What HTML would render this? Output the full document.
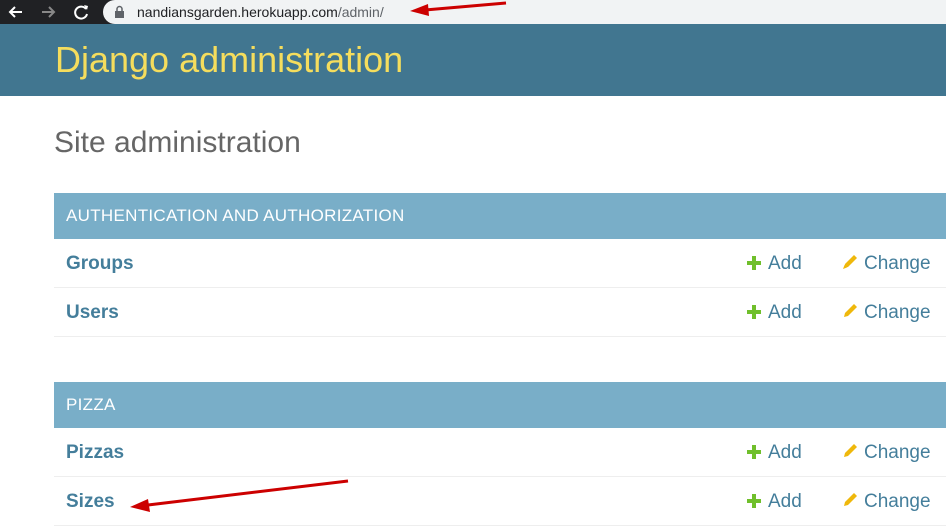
<!DOCTYPE html>
<html><head><style>
body{margin:0;width:946px;height:531px;overflow:hidden;background:#fff;font-family:"Liberation Sans",sans-serif;position:relative}
.bar{position:absolute;left:0;top:0;width:946px;height:24px;background:#202124}
.pill{position:absolute;left:103px;top:0;width:860px;height:24px;background:#f1f3f4;border-radius:12px 0 0 12px}
.url{position:absolute;left:137px;top:4px;font-size:14px;color:#202124}
.url span{color:#5f6368}
.hdr{position:absolute;left:0;top:24px;width:946px;height:72px;background:#417690}
.hdr h1{margin:0;position:absolute;left:55px;top:15px;font-weight:normal;font-size:36px;color:#f5dd5d}
.st{position:absolute;left:54px;top:126px;font-size:30px;color:#666}
.cap{position:absolute;left:54px;width:892px;height:46px;background:#79aec8;color:#fff;font-size:17px;line-height:46px;padding-left:12px;box-sizing:border-box;letter-spacing:.3px}
.row{position:absolute;left:54px;width:892px;height:49px;border-bottom:1px solid #eee;box-sizing:border-box;color:#447e9b;font-size:19px;line-height:49px;white-space:nowrap}
.row b{position:absolute;left:12px}
.add{position:absolute;left:692px;top:0}
.chg{position:absolute;left:787px;top:0}
.add svg,.chg svg{vertical-align:-2px;margin-right:6px}
</style></head><body>
<div class="bar"></div>
<svg style="position:absolute;left:0;top:0" width="100" height="24">
<path d="M22 12H10M15 7l-5 5 5 5" stroke="#fff" stroke-width="2" fill="none"/>
<path d="M42 12h12M49 7l5 5-5 5" stroke="#888" stroke-width="2" fill="none"/>
<path d="M86 9a6 6 0 1 0 1 5" stroke="#fff" stroke-width="2" fill="none"/><path d="M84 5l4 1-1 4z" fill="#fff"/>
</svg>
<div class="pill"></div>
<svg style="position:absolute;left:114px;top:5px" width="12" height="14"><rect x="1" y="6" width="9" height="7" fill="#5f6368"/><path d="M3 6V4a2.5 2.5 0 0 1 5 0v2" stroke="#5f6368" stroke-width="1.5" fill="none"/></svg>
<div class="url">nandiansgarden.herokuapp.com<span>/admin/</span></div>
<div class="hdr"><h1>Django administration</h1></div>
<div class="st">Site administration</div>
<div class="cap" style="top:193px">AUTHENTICATION AND AUTHORIZATION</div>
<div class="cap" style="top:382px">PIZZA</div>
<div class="row" style="top:239px"><b>Groups</b><span class="add"><svg width="16" height="16"><path d="M8 1v14M1 8h14" stroke="#70bf2b" stroke-width="4"/></svg>Add</span><span class="chg"><svg width="17" height="17"><path d="M3 14l1-4 9-9 3 3-9 9z" fill="#efb80b"/><path d="M2 15l1.5-4 2.5 2.5z" fill="#efb80b"/></svg>Change</span></div>
<div class="row" style="top:288px"><b>Users</b><span class="add"><svg width="16" height="16"><path d="M8 1v14M1 8h14" stroke="#70bf2b" stroke-width="4"/></svg>Add</span><span class="chg"><svg width="17" height="17"><path d="M3 14l1-4 9-9 3 3-9 9z" fill="#efb80b"/></svg>Change</span></div>
<div class="row" style="top:428px"><b>Pizzas</b><span class="add"><svg width="16" height="16"><path d="M8 1v14M1 8h14" stroke="#70bf2b" stroke-width="4"/></svg>Add</span><span class="chg"><svg width="17" height="17"><path d="M3 14l1-4 9-9 3 3-9 9z" fill="#efb80b"/></svg>Change</span></div>
<div class="row" style="top:477px"><b>Sizes</b><span class="add"><svg width="16" height="16"><path d="M8 1v14M1 8h14" stroke="#70bf2b" stroke-width="4"/></svg>Add</span><span class="chg"><svg width="17" height="17"><path d="M3 14l1-4 9-9 3 3-9 9z" fill="#efb80b"/></svg>Change</span></div>
<svg style="position:absolute;left:0;top:0" width="946" height="531">
<path d="M506 3L425 10" stroke="#c00" stroke-width="3"/><path d="M410 11l18-7 1 12z" fill="#c00"/>
<path d="M348 481L148 505" stroke="#c00" stroke-width="3"/><path d="M130 507l18-8 2 13z" fill="#c00"/>
</svg>
</body></html>
